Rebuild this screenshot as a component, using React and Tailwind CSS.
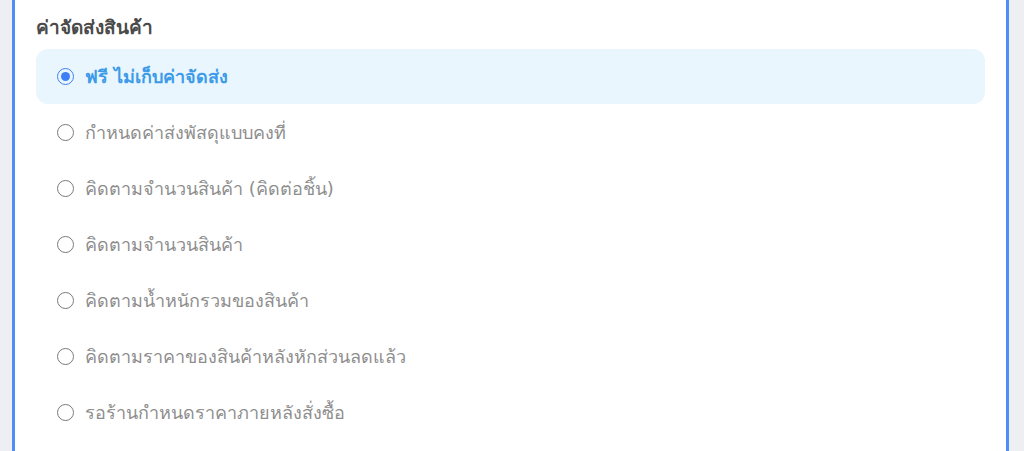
import React, { useState } from 'react';

const options = [
  'ฟรี ไม่เก็บค่าจัดส่ง',
  'กำหนดค่าส่งพัสดุแบบคงที่',
  'คิดตามจำนวนสินค้า (คิดต่อชิ้น)',
  'คิดตามจำนวนสินค้า',
  'คิดตามน้ำหนักรวมของสินค้า',
  'คิดตามราคาของสินค้าหลังหักส่วนลดแล้ว',
  'รอร้านกำหนดราคาภายหลังสั่งซื้อ',
];

const App = () => {
  const [selected, setSelected] = useState(0);

  return (
    <div className="h-[451px] w-[1024px] overflow-hidden bg-[#eeeff2] font-['DejaVu_Sans',sans-serif]">
      <div className="ml-[12px] mr-[15px] h-full border-x-[3px] border-[#4d8ef8] bg-white px-[21px]">
        <h3 className="pt-[14px] text-[19px] font-semibold leading-[26px] text-[#4a4a4a]">ค่าจัดส่งสินค้า</h3>
        <div className="mt-[9px] flex flex-col gap-px">
          {options.map((label, i) => {
            const active = i === selected;
            return (
              <button
                key={label}
                onClick={() => setSelected(i)}
                className={`flex h-[55px] items-center gap-[11px] rounded-[12px] pl-[21px] text-left ${
                  active ? 'bg-[#e9f6fd]' : 'bg-transparent'
                }`}
              >
                <span
                  className={`flex h-[17px] w-[17px] items-center justify-center rounded-full border-[1.5px] ${
                    active ? 'border-[#3f7ff6]' : 'border-[#7a7a7a]'
                  }`}
                >
                  {active && <span className="h-[9px] w-[9px] rounded-full bg-[#3f7ff6]" />}
                </span>
                <span
                  className={`text-[18px] leading-[26px] ${
                    active ? 'font-semibold text-[#3d9be9]' : 'text-[#8e8e8e]'
                  }`}
                >
                  {label}
                </span>
              </button>
            );
          })}
        </div>
      </div>
    </div>
  );
};

export default App;
